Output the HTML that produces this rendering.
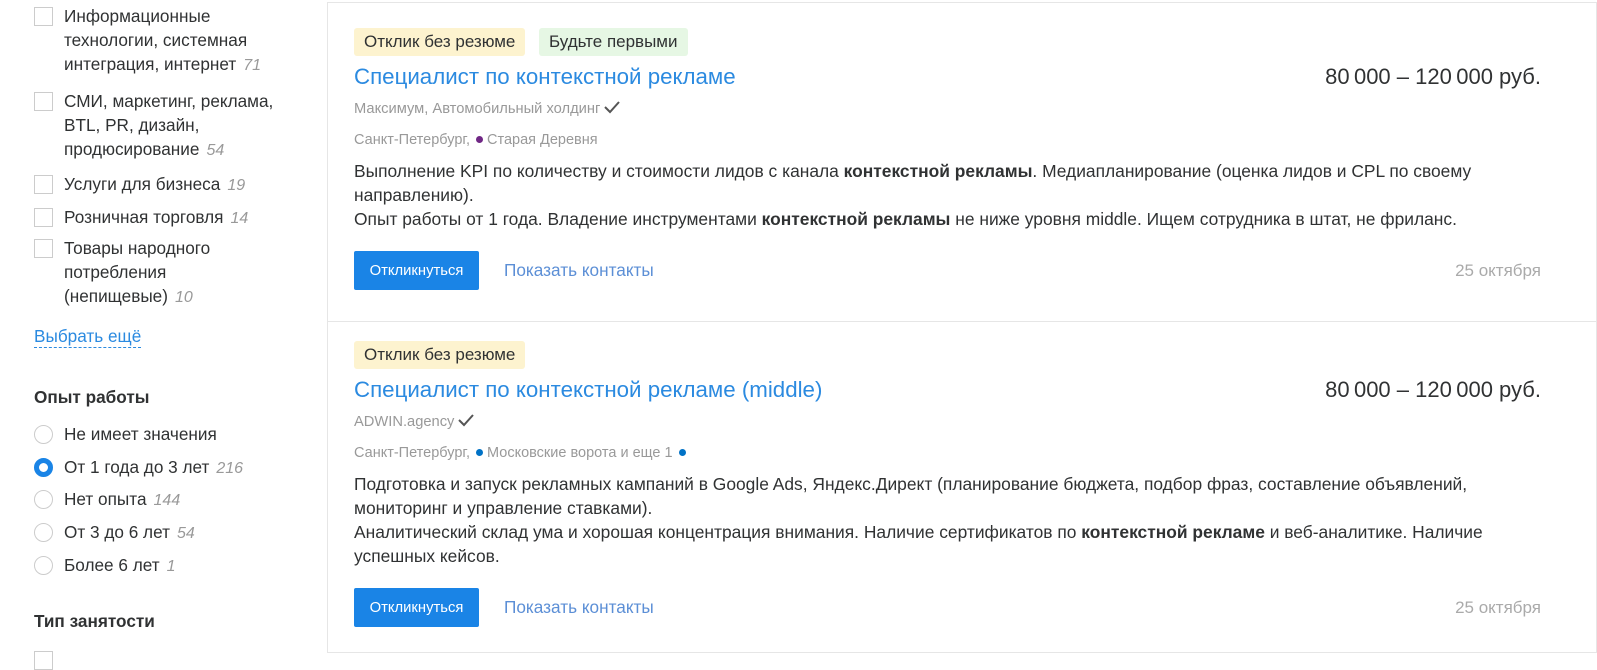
<!DOCTYPE html>
<html><head><meta charset="utf-8"><style>
*{margin:0;padding:0;box-sizing:border-box}
body{width:1597px;height:666px;overflow:hidden;background:#fff;font-family:"Liberation Sans",Arial,sans-serif;color:#303233;position:relative}
.a{position:absolute;white-space:nowrap}
.t{font-size:17.2px;line-height:24px}
.n{color:#999;font-style:italic;font-size:16px;margin-left:7px}
.cb{position:absolute;left:34px;width:19px;height:19px;border:1px solid #ccc;background:#fff}
.rb{position:absolute;left:34px;width:19px;height:19px;border:1px solid #ccc;border-radius:50%;background:#fff}
.rb.on{border:5px solid #1a84e6}
.card{position:absolute;left:327px;width:1270px;border:1px solid #e6e6e6;background:#fff}
.tag{position:absolute;height:28px;line-height:28px;padding:0 10px;font-size:17px;border-radius:3px}
.y{background:#fdf3cf}.g{background:#e6f7e4}
.ti{font-size:22.3px;color:#2b8ae0;line-height:28px}
.pr{font-size:22px;line-height:28px;right:56px}
.co{font-size:14.7px;color:#999;line-height:20px}
.lo{font-size:14.5px;color:#999;line-height:20px}
.d{font-size:17.4px;line-height:24px;color:#303233}
.btn{position:absolute;left:354px;width:125px;height:39px;background:#1a84e6;color:#fff;font-size:14.8px;display:flex;align-items:center;justify-content:center;border-radius:2px}
.lk{font-size:17.2px;color:#5c8fd6}
.dt{font-size:17px;color:#aaa;right:56px}
.dot{display:inline-block;width:7px;height:7px;border-radius:50%;margin:0 4px 2px 2px;vertical-align:middle}
.ck{display:inline-block;vertical-align:-1px;margin-left:4px}
</style></head><body>
<div class="card" style="top:2px;height:320px"></div>
<div class="card" style="top:321px;height:332px"></div>

<div class="cb" style="top:7px"></div>
<div class="a t" style="left:64px;top:4px">Информационные<br>технологии, системная<br>интеграция, интернет<span class="n">71</span></div>
<div class="cb" style="top:92px"></div>
<div class="a t" style="left:64px;top:89px">СМИ, маркетинг, реклама,<br>BTL, PR, дизайн,<br>продюсирование<span class="n">54</span></div>
<div class="cb" style="top:175px"></div>
<div class="a t" style="left:64px;top:172px">Услуги для бизнеса<span class="n">19</span></div>
<div class="cb" style="top:208px"></div>
<div class="a t" style="left:64px;top:205px">Розничная торговля<span class="n">14</span></div>
<div class="cb" style="top:239px"></div>
<div class="a t" style="left:64px;top:236px">Товары народного<br>потребления<br>(непищевые)<span class="n">10</span></div>
<div class="a t" style="left:34px;top:325px;color:#2b8ae0;border-bottom:1px dashed #2b8ae0;line-height:22px">Выбрать ещё</div>
<div class="a t" style="left:34px;top:385px;font-weight:bold">Опыт работы</div>
<div class="rb" style="top:425px"></div><div class="a t" style="left:64px;top:422px">Не имеет значения</div>
<div class="rb on" style="top:458px"></div><div class="a t" style="left:64px;top:455px">От 1 года до 3 лет<span class="n">216</span></div>
<div class="rb" style="top:490px"></div><div class="a t" style="left:64px;top:487px">Нет опыта<span class="n">144</span></div>
<div class="rb" style="top:523px"></div><div class="a t" style="left:64px;top:520px">От 3 до 6 лет<span class="n">54</span></div>
<div class="rb" style="top:556px"></div><div class="a t" style="left:64px;top:553px">Более 6 лет<span class="n">1</span></div>
<div class="a t" style="left:34px;top:609px;font-weight:bold">Тип занятости</div>
<div class="cb" style="top:651px"></div>

<div class="tag y" style="left:354px;top:28px">Отклик без резюме</div>
<div class="tag g" style="left:539px;top:28px">Будьте первыми</div>
<div class="a ti" style="left:354px;top:63px">Специалист по контекстной рекламе</div>
<div class="a pr" style="top:63px">80&#8239;000 – 120&#8239;000 руб.</div>
<div class="a co" style="left:354px;top:99px">Максимум, Автомобильный холдинг<svg class="ck" width="16" height="14" viewBox="0 0 16 14"><path d="M1 7 L6 12 L15 2" fill="none" stroke="#555" stroke-width="2"/></svg></div>
<div class="a lo" style="left:354px;top:130px">Санкт-Петербург, <span class="dot" style="background:#702785"></span>Старая Деревня</div>
<div class="a d" style="left:354px;top:159px">Выполнение KPI по количеству и стоимости лидов с канала <b>контекстной рекламы</b>. Медиапланирование (оценка лидов и CPL по своему<br>направлению).<br>Опыт работы от 1 года. Владение инструментами <b>контекстной рекламы</b> не ниже уровня middle. Ищем сотрудника в штат, не фриланс.</div>
<div class="btn" style="top:251px">Откликнуться</div>
<div class="a lk" style="left:504px;top:260px">Показать контакты</div>
<div class="a dt" style="top:261px">25 октября</div>

<div class="tag y" style="left:354px;top:341px">Отклик без резюме</div>
<div class="a ti" style="left:354px;top:376px">Специалист по контекстной рекламе (middle)</div>
<div class="a pr" style="top:376px">80&#8239;000 – 120&#8239;000 руб.</div>
<div class="a co" style="left:354px;top:412px">ADWIN.agency<svg class="ck" width="16" height="14" viewBox="0 0 16 14"><path d="M1 7 L6 12 L15 2" fill="none" stroke="#555" stroke-width="2"/></svg></div>
<div class="a lo" style="left:354px;top:443px">Санкт-Петербург, <span class="dot" style="background:#0072c6"></span>Московские ворота и еще 1 <span class="dot" style="background:#0072c6"></span></div>
<div class="a d" style="left:354px;top:472px">Подготовка и запуск рекламных кампаний в Google Ads, Яндекс.Директ (планирование бюджета, подбор фраз, составление объявлений,<br>мониторинг и управление ставками).<br>Аналитический склад ума и хорошая концентрация внимания. Наличие сертификатов по <b>контекстной рекламе</b> и веб-аналитике. Наличие<br>успешных кейсов.</div>
<div class="btn" style="top:588px">Откликнуться</div>
<div class="a lk" style="left:504px;top:597px">Показать контакты</div>
<div class="a dt" style="top:598px">25 октября</div>
</body></html>
